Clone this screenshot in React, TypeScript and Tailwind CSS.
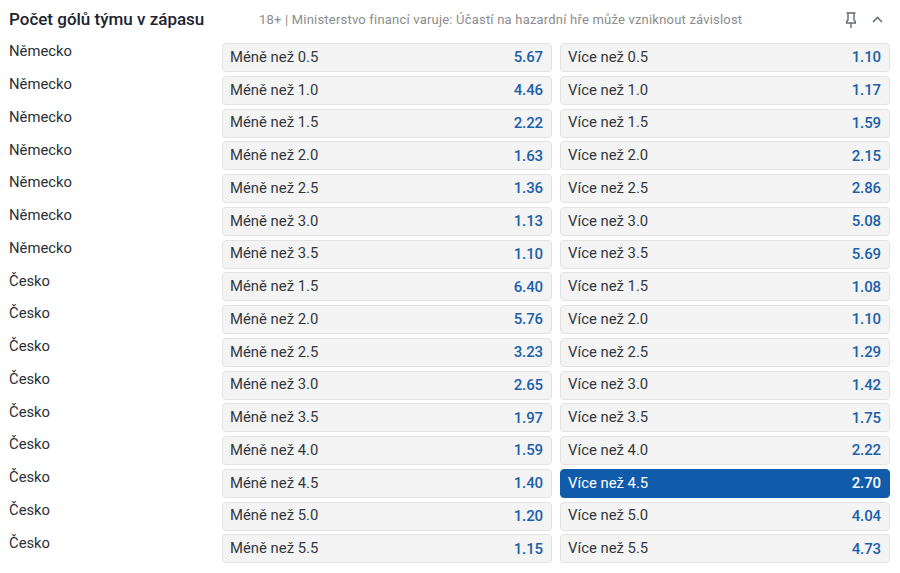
const rows = [
  { team: 'Německo', line: '0.5', under: '5.67', over: '1.10' },
  { team: 'Německo', line: '1.0', under: '4.46', over: '1.17' },
  { team: 'Německo', line: '1.5', under: '2.22', over: '1.59' },
  { team: 'Německo', line: '2.0', under: '1.63', over: '2.15' },
  { team: 'Německo', line: '2.5', under: '1.36', over: '2.86' },
  { team: 'Německo', line: '3.0', under: '1.13', over: '5.08' },
  { team: 'Německo', line: '3.5', under: '1.10', over: '5.69' },
  { team: 'Česko', line: '1.5', under: '6.40', over: '1.08' },
  { team: 'Česko', line: '2.0', under: '5.76', over: '1.10' },
  { team: 'Česko', line: '2.5', under: '3.23', over: '1.29' },
  { team: 'Česko', line: '3.0', under: '2.65', over: '1.42' },
  { team: 'Česko', line: '3.5', under: '1.97', over: '1.75' },
  { team: 'Česko', line: '4.0', under: '1.59', over: '2.22' },
  { team: 'Česko', line: '4.5', under: '1.40', over: '2.70', active: true },
  { team: 'Česko', line: '5.0', under: '1.20', over: '4.04' },
  { team: 'Česko', line: '5.5', under: '1.15', over: '4.73' },
];

function OddButton({ label, odd, active }: { label: string; odd: string; active?: boolean }) {
  return (
    <button
      className={
        active
          ? 'flex h-[29px] w-[330px] items-center justify-between rounded border border-[#105baa] bg-[#105baa] pl-[7px] pr-2 text-white'
          : 'flex h-[29px] w-[330px] items-center justify-between rounded border border-[#e3e3e3] bg-[#f4f4f4] pl-[7px] pr-2 text-[#33373d]'
      }
    >
      <span className="-mt-px text-[14.85px]">{label}</span>
      <span className={active ? 'text-[15px] font-medium tracking-[-0.1px] text-white' : 'text-[15px] font-medium tracking-[-0.1px] text-[#1a60aa]'}>
        {odd}
      </span>
    </button>
  );
}

export default function App() {
  return (
    <div className="h-[573px] w-[900px] overflow-hidden bg-white font-['Roboto',sans-serif]">
      <div className="flex h-[43px] items-center pl-[9px] pr-[17px]">
        <h2 className="-mt-1 w-[250px] shrink-0 text-[17px] font-medium text-[#1c2430]">Počet gólů týmu v zápasu</h2>
        <p className="-mt-1 flex-1 text-[13px] tracking-[0.2px] text-[#8c8c8c]">
          18+ | Ministerstvo financí varuje: Účastí na hazardní hře může vzniknout závislost
        </p>
        <div className="-mt-1 flex items-center gap-4 text-[#5f6873]">
          <svg width="10" height="16" viewBox="0 0 10 16" fill="none" stroke="currentColor" strokeWidth="1.4">
            <path d="M0.5 1h9M2 1v7L0.7 9.5V11h8.6V9.5L8 8V1M5 11v5" />
          </svg>
          <svg width="11" height="7" viewBox="0 0 11 7" fill="none" stroke="currentColor" strokeWidth="1.5">
            <path d="M1 6L5.5 1.5 10 6" />
          </svg>
        </div>
      </div>
      <div className="flex flex-col gap-[3.75px]">
        {rows.map((row) => (
          <div key={row.team + row.line} className="flex pl-[9px]">
            <div className="mt-[0.4px] w-[213px] shrink-0 text-[14.8px] leading-[17px] text-[#2b2f36]">{row.team}</div>
            <div className="flex gap-2">
              <OddButton label={`Méně než ${row.line}`} odd={row.under} />
              <OddButton label={`Více než ${row.line}`} odd={row.over} active={row.active} />
            </div>
          </div>
        ))}
      </div>
    </div>
  );
}
